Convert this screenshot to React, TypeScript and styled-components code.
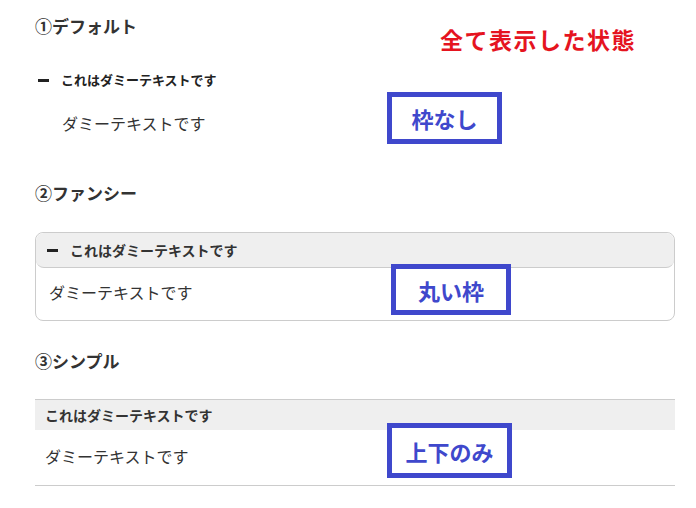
import React from 'react';
import styled, { createGlobalStyle } from 'styled-components';

const colors = {
  text: '#333',
  dark: '#222',
  line: '#ccc',
  summaryBg: '#efefef',
  red: '#e5141f',
  blue: '#3f48cc',
};

const GlobalStyle = createGlobalStyle`
  body {
    margin: 0;
    background: #fff;
    font-family: "Noto Sans CJK JP", "Noto Sans", sans-serif;
    color: ${colors.text};
  }
`;

type Variant = 'default' | 'fancy' | 'simple';

interface AccordionProps {
  variant: Variant;
  title: string;
  body: string;
  marker?: boolean;
}

function Accordion(props: AccordionProps) {
  const { variant, title, body, marker = true } = props;
  return (
    <BOX $variant={variant}>
      <SUMMARY $variant={variant}>
        {marker && <MINUS />}
        <span>{title}</span>
      </SUMMARY>
      <BODY $variant={variant}>{body}</BODY>
    </BOX>
  );
}

function App() {
  return (
    <>
      <GlobalStyle />
      <PAGE>
        <SECTION $gap={31}>
          <HEADING>①デフォルト</HEADING>
          <Accordion variant='default' title='これはダミーテキストです' body='ダミーテキストです' />
        </SECTION>
        <SECTION $gap={26}>
          <HEADING>②ファンシー</HEADING>
          <Accordion variant='fancy' title='これはダミーテキストです' body='ダミーテキストです' />
        </SECTION>
        <SECTION $gap={25}>
          <HEADING>③シンプル</HEADING>
          <Accordion variant='simple' title='これはダミーテキストです' body='ダミーテキストです' marker={false} />
        </SECTION>

        <STATE>全て表示した状態</STATE>
        <NOTE $left={352} $top={92} $w={115} $h={52}>枠なし</NOTE>
        <NOTE $left={356} $top={264} $w={120} $h={51}>丸い枠</NOTE>
        <NOTE $left={352} $top={423} $w={125} $h={55}>上下のみ</NOTE>
      </PAGE>
    </>
  );
}

const PAGE = styled.div`
  position: relative;
  display: flex;
  flex-direction: column;
  gap: 27px;
  width: 640px;
  margin-left: 35px;
  padding-top: 13px;
`;

const SECTION = styled.section<{ $gap: number }>`
  display: flex;
  flex-direction: column;
  gap: ${(p) => p.$gap}px;
  &:first-child {
    margin-bottom: 16px;
  }
`;

const HEADING = styled.h2`
  margin: 0;
  font-size: 17px;
  line-height: 26px;
  font-weight: 700;
  color: ${colors.text};
`;

const BOX = styled.div<{ $variant: Variant }>`
  display: flex;
  flex-direction: column;
  ${(p) =>
    p.$variant === 'fancy' &&
    `
    border: 1px solid ${colors.line};
    border-radius: 8px;
    overflow: hidden;
  `}
  ${(p) =>
    p.$variant === 'simple' &&
    `
    border-top: 1px solid ${colors.line};
    border-bottom: 1px solid ${colors.line};
  `}
`;

const SUMMARY = styled.div<{ $variant: Variant }>`
  display: flex;
  align-items: center;
  font-weight: 700;
  ${(p) =>
    p.$variant === 'default'
      ? `
    gap: 12px;
    padding-left: 3px;
    font-size: 13px;
    line-height: 20px;
    color: ${colors.dark};
  `
      : p.$variant === 'fancy'
      ? `
    gap: 12px;
    height: 34px;
    padding-left: 11px;
    font-size: 14px;
    background: ${colors.summaryBg};
    border-bottom: 1px solid ${colors.line};
    border-radius: 8px;
  `
      : `
    height: 30px;
    padding-left: 10px;
    font-size: 14px;
    background: ${colors.summaryBg};
  `}
`;

const MINUS = styled.span`
  display: block;
  width: 11px;
  height: 3px;
  background: ${colors.dark};
`;

const BODY = styled.div<{ $variant: Variant }>`
  font-size: 16px;
  color: ${colors.text};
  ${(p) =>
    p.$variant === 'default'
      ? `
    padding: 21px 0 2px 27px;
    line-height: 24px;
  `
      : p.$variant === 'fancy'
      ? `
    display: flex;
    align-items: center;
    height: 52px;
    padding: 0 0 5px 13px;
    box-sizing: border-box;
  `
      : `
    display: flex;
    align-items: center;
    height: 55px;
    padding: 0 0 4px 10px;
    box-sizing: border-box;
  `}
`;

const STATE = styled.div`
  position: absolute;
  left: 405px;
  top: 25px;
  font-size: 23px;
  line-height: 28px;
  font-weight: 700;
  letter-spacing: 1.5px;
  color: ${colors.red};
`;

const NOTE = styled.div<{ $left: number; $top: number; $w: number; $h: number }>`
  position: absolute;
  left: ${(p) => p.$left}px;
  top: ${(p) => p.$top}px;
  width: ${(p) => p.$w}px;
  height: ${(p) => p.$h}px;
  box-sizing: border-box;
  display: flex;
  align-items: center;
  justify-content: center;
  border: 5px solid ${colors.blue};
  background: #fff;
  font-size: 22px;
  font-weight: 700;
  color: ${colors.blue};
`;

export default App;
